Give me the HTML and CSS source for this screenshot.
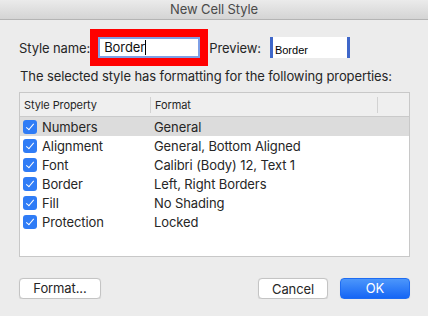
FILE: index.html
```html
<!DOCTYPE html>
<html>
<head>
  <title>New Cell Style</title>
  <link rel="stylesheet" href="styles.css">
</head>
<body>
  <div class="titlebar">New Cell Style</div>
  <div class="content">
    <div class="name-row">
      <span class="label">Style name:</span>
      <span class="highlight"><span class="name-input">Border<span class="caret"></span></span></span>
      <span class="label preview-label">Preview:</span>
      <span class="preview">Border</span>
    </div>
    <p class="intro">The selected style has formatting for the following properties:</p>
    <div class="list">
      <div class="list-head">
        <div class="col-prop">Style Property</div>
        <div class="col-format">Format</div>
        <div class="col-extra"></div>
      </div>
      <div class="list-row selected">
        <div class="col-prop"><span class="check"></span>Numbers</div>
        <div class="col-format">General</div>
      </div>
      <div class="list-row">
        <div class="col-prop"><span class="check"></span>Alignment</div>
        <div class="col-format">General, Bottom Aligned</div>
      </div>
      <div class="list-row">
        <div class="col-prop"><span class="check"></span>Font</div>
        <div class="col-format">Calibri (Body) 12, Text 1</div>
      </div>
      <div class="list-row">
        <div class="col-prop"><span class="check"></span>Border</div>
        <div class="col-format">Left, Right Borders</div>
      </div>
      <div class="list-row">
        <div class="col-prop"><span class="check"></span>Fill</div>
        <div class="col-format">No Shading</div>
      </div>
      <div class="list-row">
        <div class="col-prop"><span class="check"></span>Protection</div>
        <div class="col-format">Locked</div>
      </div>
    </div>
    <div class="buttons">
      <button class="btn format-btn">Format...</button>
      <span class="spacer"></span>
      <button class="btn cancel-btn">Cancel</button>
      <button class="btn ok-btn">OK</button>
    </div>
  </div>
</body>
</html>
```

FILE: styles.css
```css
body {
  margin: 0;
  background: #ececec;
  font-family: Inter, "Noto Sans", sans-serif;
  font-size: 13px;
  letter-spacing: -0.1px;
  color: #262626;
}
.titlebar {
  height: 19px;
  line-height: 19px;
  border-bottom: 1px solid #b4b4b4;
  background: linear-gradient(#ebebeb, #d4d4d4);
  text-align: center;
  color: #4a4a4a;
}
.content {
  padding: 9px 18px 0 19px;
}
.name-row {
  display: flex;
  align-items: center;
}
.label {
  margin-right: 0;
}
.highlight {
  border: 8px solid #ff0000;
  display: flex;
}
.name-input {
  width: 102px;
  height: 21px;
  box-sizing: border-box;
  border: 2px solid #7d9fe6;
  background: #fff;
  padding-left: 4px;
  line-height: 17px;
  font-size: 13px;
  display: flex;
  align-items: center;
  color: #111;
}
.caret {
  display: inline-block;
  width: 1px;
  height: 15px;
  background: #000;
}
.preview-label {
  margin-left: 1px;
  margin-right: 9px;
}
.preview {
  width: 80px;
  height: 21px;
  box-sizing: border-box;
  background: #fff;
  border-left: 3px solid #3f67c9;
  border-right: 3px solid #3f67c9;
  font-family: "Liberation Sans", sans-serif;
  font-size: 11px;
  letter-spacing: 0;
  color: #000;
  padding: 7px 0 0 2px;
  line-height: 13px;
}
.intro {
  margin: 2px 0 8px 1px;
  line-height: 16px;
}
.list {
  width: 391px;
  height: 165px;
  box-sizing: border-box;
  border: 1px solid #c8c8c8;
  background: #fff;
}
.list-head {
  display: flex;
  height: 23px;
  align-items: center;
  background: #efefef;
  border-bottom: 1px solid #cacaca;
  font-size: 11px;
}
.list-head .col-prop {
  padding-left: 4px;
}
.list-head .col-format {
  border-left: 1px solid #d2d2d2;
  height: 16px;
  line-height: 16px;
}
.list-head .col-extra {
  border-left: 1px solid #d2d2d2;
  height: 16px;
}
.col-prop {
  width: 130px;
  box-sizing: border-box;
  display: flex;
  align-items: center;
}
.col-format {
  width: 227px;
  box-sizing: border-box;
  padding-left: 4px;
}
.list-row {
  display: flex;
  height: 19px;
  align-items: center;
}
.list-row .col-prop {
  padding-left: 3px;
}
.list-row.selected {
  background: #dcdcdc;
}
.check {
  width: 14px;
  height: 14px;
  border-radius: 3px;
  background: #2f7cf6;
  margin-right: 5px;
  position: relative;
}
.check::after {
  content: "";
  position: absolute;
  left: 5px;
  top: 2px;
  width: 3px;
  height: 7px;
  border: solid #fff;
  border-width: 0 1.5px 1.5px 0;
  transform: rotate(40deg);
}
.buttons {
  display: flex;
  align-items: center;
  margin-top: 20px;
}
.spacer {
  flex: 1;
}
.btn {
  height: 21px;
  box-sizing: border-box;
  border: 1px solid #c4c4c4;
  border-radius: 4px;
  background: #fff;
  font-family: Inter, "Noto Sans", sans-serif;
  font-size: 13px;
  letter-spacing: -0.1px;
  color: #262626;
  padding: 0;
  box-shadow: 0 0.5px 1px rgba(0, 0, 0, 0.1);
}
.format-btn {
  width: 82px;
}
.cancel-btn {
  width: 70px;
  margin-top: 1px;
}
.ok-btn {
  width: 70px;
  margin-left: 12px;
  border: 1px solid #1e6cf2;
  background: linear-gradient(#4c96fb, #1566f5);
  color: #fff;
}
```
